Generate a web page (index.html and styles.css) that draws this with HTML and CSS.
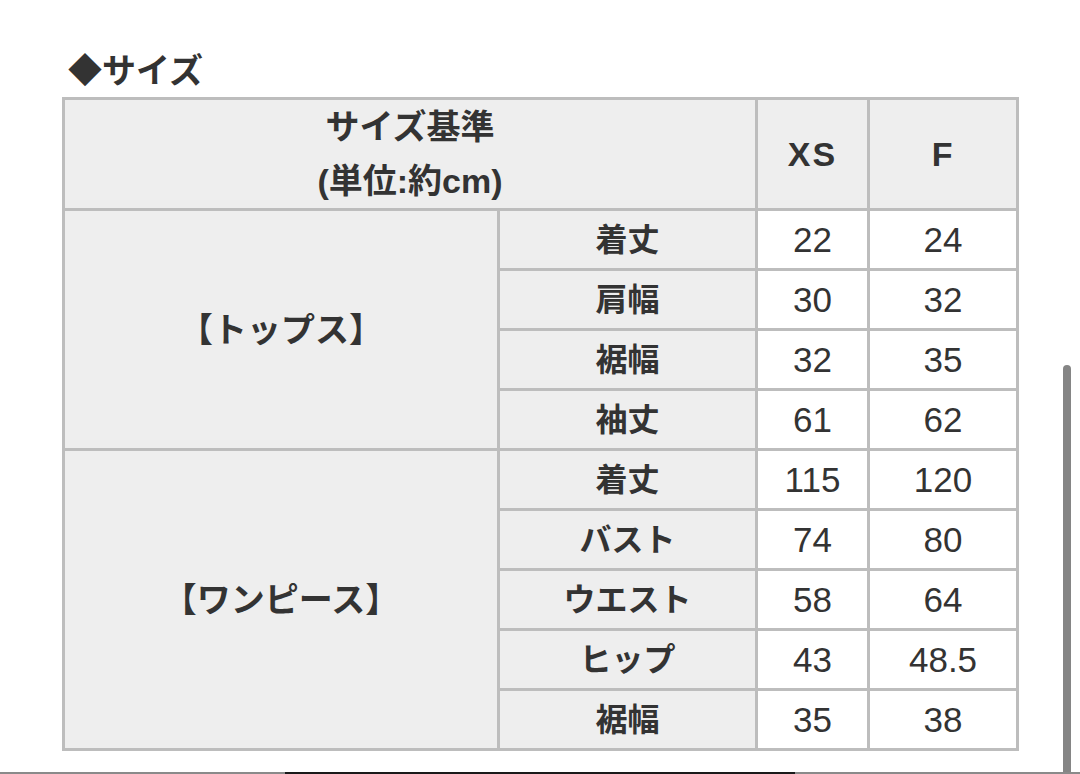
FILE: index.html
```html
<!DOCTYPE html>
<html lang="ja">
<head>
<meta charset="utf-8">
<link rel="stylesheet" href="styles.css">
</head>
<body>
<div class="page">
  <h2 class="title">◆サイズ</h2>
  <table class="size-table">
    <colgroup>
      <col class="c1"><col class="c2"><col class="c3"><col class="c4">
    </colgroup>
    <thead>
      <tr class="head">
        <th colspan="2">サイズ基準<br>(単位:約cm)</th>
        <th class="sz">XS</th>
        <th class="sz">F</th>
      </tr>
    </thead>
    <tbody>
      <tr><td class="grp" rowspan="4">【トップス】</td><td class="lbl">着丈</td><td>22</td><td>24</td></tr>
      <tr><td class="lbl">肩幅</td><td>30</td><td>32</td></tr>
      <tr><td class="lbl">裾幅</td><td>32</td><td>35</td></tr>
      <tr><td class="lbl">袖丈</td><td>61</td><td>62</td></tr>
      <tr><td class="grp" rowspan="5">【ワンピース】</td><td class="lbl">着丈</td><td>115</td><td>120</td></tr>
      <tr><td class="lbl">バスト</td><td>74</td><td>80</td></tr>
      <tr><td class="lbl">ウエスト</td><td>58</td><td>64</td></tr>
      <tr><td class="lbl">ヒップ</td><td>43</td><td>48.5</td></tr>
      <tr><td class="lbl">裾幅</td><td>35</td><td>38</td></tr>
    </tbody>
  </table>
</div>
<div class="scrollbar"></div>
<div class="bottom-line"><span class="indicator"></span></div>
</body>
</html>
```
FILE: styles.css
```css
html, body {
  margin: 0;
  padding: 0;
  background: #ffffff;
}
body {
  width: 1080px;
  height: 774px;
  overflow: hidden;
  position: relative;
  font-family: "Liberation Sans", "Noto Sans CJK JP", sans-serif;
  color: #333333;
}
.page {
  padding: 50px 0 0 62px;
}
.title {
  margin: 0 0 5px 6px;
  font-size: 34px;
  line-height: 42px;
  font-weight: bold;
  color: #333;
}
.size-table {
  border-collapse: collapse;
  table-layout: fixed;
  width: 957px;
  border: 3px solid #bdbdbd;
}
.c1 { width: 435px; }
.c2 { width: 258px; }
.c3 { width: 112px; }
.c4 { width: 149px; }
.size-table th,
.size-table td {
  border: 3px solid #bdbdbd;
  text-align: center;
  vertical-align: middle;
  padding: 0;
  font-size: 35px;
}
.size-table th {
  background: #eeeeee;
  font-weight: bold;
  font-size: 34px;
  line-height: 54px;
  height: 108px;
}
.size-table th.sz {
  font-size: 34px;
  letter-spacing: 2px;
}
.size-table td {
  height: 57px;
  line-height: 36px;
  background: #ffffff;
  font-weight: normal;
}
.size-table td.grp,
.size-table td.lbl {
  background: #eeeeee;
  font-weight: 600;
  font-size: 32px;
}
.size-table td.grp {
  font-size: 34px;
}
.scrollbar {
  position: absolute;
  left: 1063px;
  top: 365px;
  width: 8px;
  height: 420px;
  border-radius: 4px;
  background: #858585;
}
.bottom-line {
  position: absolute;
  left: 0;
  bottom: 0;
  width: 1080px;
  height: 2px;
  background: #8a8a8a;
}
.indicator {
  position: absolute;
  left: 285px;
  top: 0;
  width: 510px;
  height: 2px;
  background: #1a1a1a;
}
```
